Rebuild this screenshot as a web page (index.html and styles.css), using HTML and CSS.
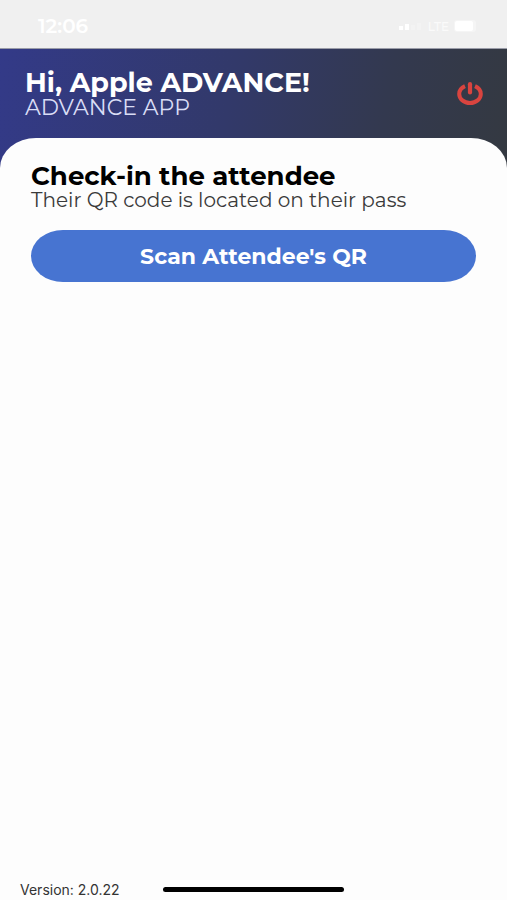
FILE: index.html
```html
<!DOCTYPE html>
<html lang="en">
<head>
<meta charset="utf-8">
<meta name="viewport" content="width=device-width, initial-scale=1">
<title>Advance App</title>
<link rel="stylesheet" href="styles.css">
</head>
<body>
<div class="status">
  <span class="time">12:06</span>
  <div class="signals">
    <svg width="24" height="10" viewBox="0 0 24 10" aria-hidden="true">
      <path d="M0 5h4v4H0zM6 3h4v6H6z" fill="#fff"/>
      <path d="M12 4h4v5h-4zM18 2h4v7h-4z" fill="#f3f3f3"/>
    </svg>
    <span class="network">LTE</span>
    <svg width="24" height="12" viewBox="0 0 24 12" aria-hidden="true">
      <rect width="22" height="12" rx="3" fill="#f5f5f5"/>
      <rect x="1" y="1" width="18" height="10" rx="2" fill="#fff"/>
    </svg>
  </div>
</div>
<header class="header">
  <div>
    <h1 class="greeting">Hi, Apple ADVANCE!</h1>
    <p class="app-name">ADVANCE APP</p>
  </div>
  <button class="power" type="button" aria-label="Log out">
    <svg width="26" height="24" viewBox="0 0 26 24" aria-hidden="true" fill="none" stroke="#d9443f" stroke-linecap="round">
      <path d="M8 4.200C4.400 5.800 2.200 8.700 2.200 12C2.200 17 7 21 13 21S23.800 17 23.800 12C23.800 8.700 21.600 5.800 18 4.200" stroke-width="4" stroke-linecap="butt"/>
      <path d="M13 2.200V10.500" stroke-width="4.200"/>
    </svg>
  </button>
</header>
<main class="sheet">
  <h2 class="title">Check-in the attendee</h2>
  <p class="hint">Their QR code is located on their pass</p>
  <button class="scan" type="button">Scan Attendee's QR</button>
</main>
<footer class="footer">
  <span class="version">Version: 2.0.22</span>
  <div class="home-bar"></div>
</footer>
</body>
</html>
```
FILE: styles.css
```css
* {
  box-sizing: border-box;
}

body {
  margin: 0;
  min-height: 100vh;
  display: flex;
  flex-direction: column;
  background: #fdfdfd;
  color: #000;
  font-family: Montserrat, Inter, sans-serif;
}

h1, h2, p {
  margin: 0;
}

button {
  border: 0;
  padding: 0;
  font-family: inherit;
  cursor: pointer;
}

.status {
  height: 49px;
  padding: 4px 29px 0 38px;
  display: flex;
  align-items: center;
  justify-content: space-between;
  background: #f0f0f0;
  border-bottom: 1px solid #9a9ca8;
  color: #fff;
}

.time {
  font-size: 20px;
  font-weight: 600;
}

.signals {
  display: flex;
  align-items: center;
  gap: 5px;
}

.network {
  font-size: 12px;
  font-weight: 500;
  color: #fafafa;
}

.header {
  height: 120px;
  padding: 20px 24px 0 25px;
  display: flex;
  align-items: flex-start;
  justify-content: space-between;
  background: linear-gradient(100deg, #333a88 0%, #32396a 45%, #33394f 75%, #343941 100%);
  color: #fff;
}

.greeting {
  font-size: 27px;
  line-height: 28px;
  font-weight: 700;
}

.app-name {
  font-size: 22px;
  line-height: 22px;
  font-weight: 400;
  color: #d9ddf5;
}

.power {
  height: 24px;
  margin-top: 13px;
  background: none;
}

.power svg {
  display: block;
}

.sheet {
  flex: 1;
  margin-top: -31px;
  padding: 24px 31px 0;
  background: #fdfdfd;
  border-radius: 36px 36px 0 0 / 30px 30px 0 0;
}

.title {
  font-size: 26px;
  line-height: 28px;
  font-weight: 700;
}

.hint {
  font-size: 20px;
  line-height: 20px;
  color: #3a3a3a;
}

.scan {
  display: block;
  width: 100%;
  height: 52px;
  margin-top: 20px;
  border-radius: 32px / 26px;
  background: #4774d1;
  color: #fff;
  font-size: 22px;
  font-weight: 700;
}

.footer {
  height: 22px;
  padding: 0 20px;
  display: grid;
  grid-template-columns: 1fr 181px 1fr;
  align-items: center;
}

.version {
  font-family: Inter, sans-serif;
  font-size: 14px;
  color: #333;
}

.home-bar {
  height: 5px;
  border-radius: 3px;
  background: #000;
}
```
